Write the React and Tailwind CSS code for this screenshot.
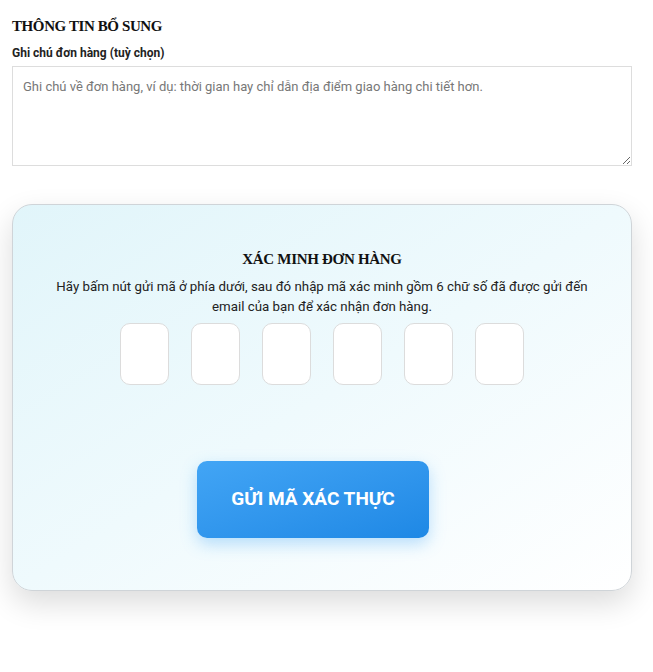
export default function App() {
  const boxes = [0, 1, 2, 3, 4, 5];

  return (
    <div className="min-h-screen bg-white px-3 pt-4" style={{ fontFamily: 'Roboto, "Noto Sans", sans-serif' }}>
      {/* Extra info */}
      <h3 className="text-[15px] font-bold leading-5 text-[#111] tracking-[-0.4px]" style={{ fontFamily: '"Liberation Serif", serif' }}>
        THÔNG TIN BỔ SUNG
      </h3>
      <label className="mt-[9px] block text-[12px] font-bold leading-4 text-[#222]">
        Ghi chú đơn hàng (tuỳ chọn)
      </label>
      <textarea
        className="mt-[5px] block h-[100px] w-[620px] resize-y border border-[#ddd] px-[10px] py-[10px] text-[13px] leading-5 text-[#333] outline-none placeholder:text-[#777]"
        placeholder="Ghi chú về đơn hàng, ví dụ: thời gian hay chỉ dẫn địa điểm giao hàng chi tiết hơn."
      />

      {/* Verify card */}
      <div className="mt-[38px] w-[620px] rounded-[20px] border border-[#cfd4d8] bg-gradient-to-br from-[#e1f5fa] via-[#effafd] to-white px-10 pb-[52px] pt-[44px] shadow-[0_12px_30px_rgba(0,0,0,0.14)]">
        <h3 className="text-center text-[15px] font-bold leading-5 text-[#111] tracking-[-0.3px]" style={{ fontFamily: '"Liberation Serif", serif' }}>
          XÁC MINH ĐƠN HÀNG
        </h3>
        <p className="mt-[8px] text-center text-[13.3px] leading-[20px] text-[#222]">
          Hãy bấm nút gửi mã ở phía dưới, sau đó nhập mã xác minh gồm 6 chữ số đã được gửi đến email của bạn để xác nhận đơn hàng.
        </p>
        <div className="mt-[6px] flex justify-center gap-[22px]">
          {boxes.map((b) => (
            <input
              key={b}
              maxLength={1}
              className="h-[62px] w-[49px] rounded-[10px] border border-[#dcdcdc] bg-white text-center text-xl outline-none"
            />
          ))}
        </div>
        <div className="mt-[76px] flex justify-center">
          <button className="mr-[18px] h-[77px] w-[232px] rounded-[10px] bg-gradient-to-br from-[#42a5f5] to-[#1e88e5] text-[19px] font-bold text-white shadow-[0_6px_16px_rgba(66,165,245,0.35)]">
            GỬI MÃ XÁC THỰC
          </button>
        </div>
      </div>
    </div>
  );
}
